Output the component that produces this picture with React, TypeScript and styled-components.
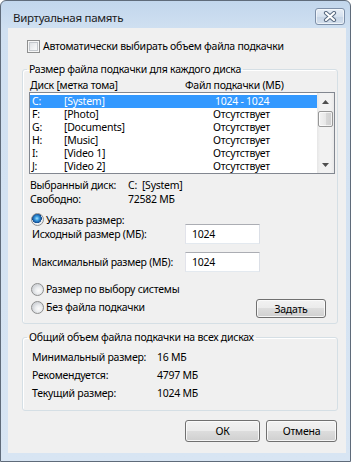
import styled, { createGlobalStyle } from "styled-components";

const GlobalStyle = createGlobalStyle`
  html, body { margin: 0; padding: 0; background: #ffffff; }
  body {
    font-family: "Noto Sans", "Open Sans", sans-serif;
    font-size: 10.5px;
    letter-spacing: -0.25px;
    color: #000;
    white-space: nowrap;
  }
  input, button { font: inherit; color: inherit; letter-spacing: inherit; }
`;

const Window = styled.div`
  width: 351px;
  box-sizing: border-box;
  border: 1px solid #5f6b7a;
  border-radius: 6px 6px 0 0;
  background: linear-gradient(180deg, #c2d6ec 0px, #d0e0f1 28px, #d8e5f3 100%);
  display: flex;
  flex-direction: column;
`;

const TitleBar = styled.div`
  height: 27px;
  display: flex;
  align-items: flex-start;
  justify-content: space-between;
  padding: 0 5px 0 12px;
`;

const Title = styled.div`
  margin-top: 9px;
  line-height: 16px;
  font-size: 11.5px;
  letter-spacing: -0.3px;
  color: #1b1b1b;
`;

const CloseButton = styled.div`
  margin-top: 7px;
  width: 30px;
  height: 17px;
  box-sizing: border-box;
  border: 1px solid #7d8fa8;
  border-radius: 3px;
  background: linear-gradient(180deg, #e8eef6 0%, #d6e1ee 50%, #c7d5e6 51%, #d3dfed 100%);
  box-shadow: inset 0 0 0 1px rgba(255, 255, 255, 0.6);
  display: flex;
  align-items: center;
  justify-content: center;
`;

const Client = styled.div`
  margin: 0 4px 8px 7px;
  background: #f0f0f0;
  padding: 11px 8px 11px 14px;
  display: flex;
  flex-direction: column;
  line-height: 14px;
`;

const CheckRow = styled.div`
  height: 14px;
  display: flex;
  align-items: center;
  gap: 3px;
  padding-left: 5px;
`;

const CheckBox = styled.span`
  width: 13px;
  height: 13px;
  box-sizing: border-box;
  border: 1px solid #8e8f8f;
  background: linear-gradient(135deg, #d6d9dd 0%, #f2f3f4 60%, #fdfdfd 100%);
  box-shadow: inset 0 0 0 1px #f6f6f6, inset 0 0 0 2px #c4c8cd;
`;

const Group = styled.fieldset<{ $top: number; $bottom: number }>`
  margin: ${({ $top }) => $top}px 0 0 0;
  padding: 0 2px ${({ $bottom }) => $bottom}px 6px;
  border: 1px solid #d5dfe5;
  border-radius: 3px;
  box-shadow: inset 1px 1px 0 #ffffff;
  min-width: 0;
`;

const Legend = styled.legend`
  padding: 0 2px;
  margin-left: -2px;
  line-height: 14px;
`;

const ListHeader = styled.div`
  margin-top: 3px;
  height: 13px;
  line-height: 13px;
  display: grid;
  grid-template-columns: 155px 1fr;
  padding-left: 1px;
`;

const ListBox = styled.div`
  height: 82px;
  box-sizing: border-box;
  border: 1px solid #828790;
  background: #fff;
  display: flex;
`;

const ListRows = styled.div`
  flex: 1;
  padding-top: 2px;
`;

const ListRow = styled.div<{ $selected?: boolean }>`
  height: 13px;
  line-height: 13px;
  display: grid;
  grid-template-columns: 32px 149px 1fr;
  padding-left: 2px;
  background: ${({ $selected }) => ($selected ? "#3399ff" : "transparent")};
  color: ${({ $selected }) => ($selected ? "#fff" : "#000")};
`;

const SizeCell = styled.span<{ $shift?: number }>`
  padding-left: ${({ $shift }) => $shift ?? 0}px;
`;

const ScrollBar = styled.div`
  width: 17px;
  background: linear-gradient(90deg, #e6e6e6 0%, #f2f2f2 20%, #f2f2f2 80%, #e9e9e9 100%);
  display: flex;
  flex-direction: column;
  align-items: center;
`;

const ScrollArrow = styled.div`
  height: 17px;
  width: 17px;
  display: flex;
  align-items: center;
  justify-content: center;
`;

const ScrollTrack = styled.div`
  flex: 1;
`;

const ScrollThumb = styled.div`
  margin-top: 1px;
  width: 15px;
  height: 16px;
  box-sizing: border-box;
  border: 1px solid #979797;
  border-radius: 2px;
  background: linear-gradient(90deg, #f3f3f3 0%, #e8e8e8 50%, #d8d8d8 51%, #cfcfcf 100%);
  box-shadow: inset 0 0 0 1px rgba(255, 255, 255, 0.7);
`;

const InfoGrid = styled.div<{ $col: number; $row: number; $top: number; $indent: number }>`
  margin-top: ${({ $top }) => $top}px;
  padding-left: ${({ $indent }) => $indent}px;
  display: grid;
  grid-template-columns: ${({ $col }) => $col}px 1fr;
  grid-auto-rows: ${({ $row }) => $row}px;
  align-items: center;
`;

const RadioRow = styled.div<{ $top: number; $height: number }>`
  margin-top: ${({ $top }) => $top}px;
  height: ${({ $height }) => $height}px;
  display: flex;
  align-items: center;
  gap: 2px;
  padding-left: 2px;
`;

const Radio = styled.span<{ $checked?: boolean }>`
  flex: none;
  width: 13px;
  height: 13px;
  box-sizing: border-box;
  border-radius: 50%;
  border: 1px solid #8e8f8f;
  background: ${({ $checked }) =>
    $checked
      ? "radial-gradient(circle at 45% 40%, #a6e1ff 0px, #3b9ee0 2px, #1a5fa8 4px, #0f4686 4.6px, #eef0f2 5px, #dfe2e6 100%)"
      : "radial-gradient(circle at 60% 60%, #fbfbfb 0px, #eceef0 3px, #d3d6da 6px)"};
`;

const FieldRow = styled.div<{ $top: number }>`
  margin-top: ${({ $top }) => $top}px;
  display: grid;
  grid-template-columns: 153px 75px;
  align-items: center;
  padding-left: 3px;
`;

const TextInput = styled.input`
  width: 75px;
  height: 20px;
  box-sizing: border-box;
  margin: 0;
  border: 1px solid #e3e9ef;
  border-top-color: #abadb3;
  border-left-color: #e2e3ea;
  border-right-color: #dbdfe6;
  background: #fff;
  padding: 0 0 0 6px;
  outline: none;
`;

const ActionRow = styled.div`
  margin-top: 3px;
  display: flex;
  align-items: flex-start;
`;

const Button = styled.button<{ $width: number; $height: number }>`
  width: ${({ $width }) => $width}px;
  height: ${({ $height }) => $height}px;
  box-sizing: border-box;
  margin: 0;
  padding: 0;
  border: 1px solid #707070;
  border-radius: 3px;
  background: linear-gradient(180deg, #f2f2f2 0%, #ebebeb 48%, #dddddd 50%, #cfcfcf 100%);
  box-shadow: inset 0 0 0 1px rgba(252, 252, 252, 0.85);
  line-height: 14px;
  cursor: default;
`;

const SetButton = styled(Button)`
  margin-left: auto;
  margin-right: 9px;
`;

const DialogButtons = styled.div`
  margin-top: 9px;
  display: flex;
  justify-content: flex-end;
  gap: 6px;
  padding-right: 1px;
`;

const drives = [
  { letter: "C:", label: "[System]", size: "1024 - 1024", selected: true },
  { letter: "F:", label: "[Photo]", size: "Отсутствует" },
  { letter: "G:", label: "[Documents]", size: "Отсутствует" },
  { letter: "H:", label: "[Music]", size: "Отсутствует" },
  { letter: "I:", label: "[Video 1]", size: "Отсутствует" },
  { letter: "J:", label: "[Video 2]", size: "Отсутствует" },
];

function CloseGlyph() {
  return (
    <svg width="14" height="11" viewBox="0 0 14 11">
      <path d="M3 2 L11 9 M11 2 L3 9" stroke="#5a6b82" strokeWidth="4.2" strokeLinecap="round" />
      <path d="M3 2 L11 9 M11 2 L3 9" stroke="#ffffff" strokeWidth="2.2" strokeLinecap="round" />
    </svg>
  );
}

function Arrow({ down }: { down?: boolean }) {
  return (
    <svg width="7" height="4" viewBox="0 0 7 4">
      <polygon points={down ? "0,0 7,0 3.5,4" : "3.5,0 7,4 0,4"} fill="#4f4f4f" />
    </svg>
  );
}

export default function App() {
  return (
    <>
      <GlobalStyle />
      <Window>
        <TitleBar>
          <Title>Виртуальная память</Title>
          <CloseButton>
            <CloseGlyph />
          </CloseButton>
        </TitleBar>
        <Client>
          <CheckRow>
            <CheckBox />
            <span>Автоматически выбирать объем файла подкачки</span>
          </CheckRow>

          <Group $top={9} $bottom={5}>
            <Legend>Размер файла подкачки для каждого диска</Legend>
            <ListHeader>
              <span>Диск [метка тома]</span>
              <span>Файл подкачки (МБ)</span>
            </ListHeader>
            <ListBox>
              <ListRows>
                {drives.map((d) => (
                  <ListRow key={d.letter} $selected={d.selected}>
                    <span>{d.letter}</span>
                    <span>{d.label}</span>
                    <SizeCell $shift={d.selected ? 2 : 0}>{d.size}</SizeCell>
                  </ListRow>
                ))}
              </ListRows>
              <ScrollBar>
                <ScrollArrow>
                  <Arrow />
                </ScrollArrow>
                <ScrollThumb />
                <ScrollTrack />
                <ScrollArrow>
                  <Arrow down />
                </ScrollArrow>
              </ScrollBar>
            </ListBox>

            <InfoGrid $col={98} $row={14} $top={4} $indent={1}>
              <span>Выбранный диск:</span>
              <span>C:&nbsp;&nbsp;[System]</span>
              <span>Свободно:</span>
              <span>72582 МБ</span>
            </InfoGrid>

            <RadioRow $top={9} $height={9}>
              <Radio $checked />
              <span>Указать размер:</span>
            </RadioRow>
            <FieldRow $top={0}>
              <span>Исходный размер (МБ):</span>
              <TextInput readOnly value="1024" />
            </FieldRow>
            <FieldRow $top={8}>
              <span>Максимальный размер (МБ):</span>
              <TextInput readOnly value="1024" />
            </FieldRow>

            <RadioRow $top={10} $height={14}>
              <Radio />
              <span>Размер по выбору системы</span>
            </RadioRow>
            <ActionRow>
              <RadioRow $top={1} $height={14}>
                <Radio />
                <span>Без файла подкачки</span>
              </RadioRow>
              <SetButton $width={70} $height={19}>
                Задать
              </SetButton>
            </ActionRow>
          </Group>

          <Group $top={6} $bottom={8}>
            <Legend>Общий объем файла подкачки на всех дисках</Legend>
            <InfoGrid $col={125} $row={18} $top={4} $indent={3}>
              <span>Минимальный размер:</span>
              <span>16 МБ</span>
              <span>Рекомендуется:</span>
              <span>4797 МБ</span>
              <span>Текущий размер:</span>
              <span>1024 МБ</span>
            </InfoGrid>
          </Group>

          <DialogButtons>
            <Button $width={75} $height={22}>
              ОК
            </Button>
            <Button $width={71} $height={22}>
              Отмена
            </Button>
          </DialogButtons>
        </Client>
      </Window>
    </>
  );
}
